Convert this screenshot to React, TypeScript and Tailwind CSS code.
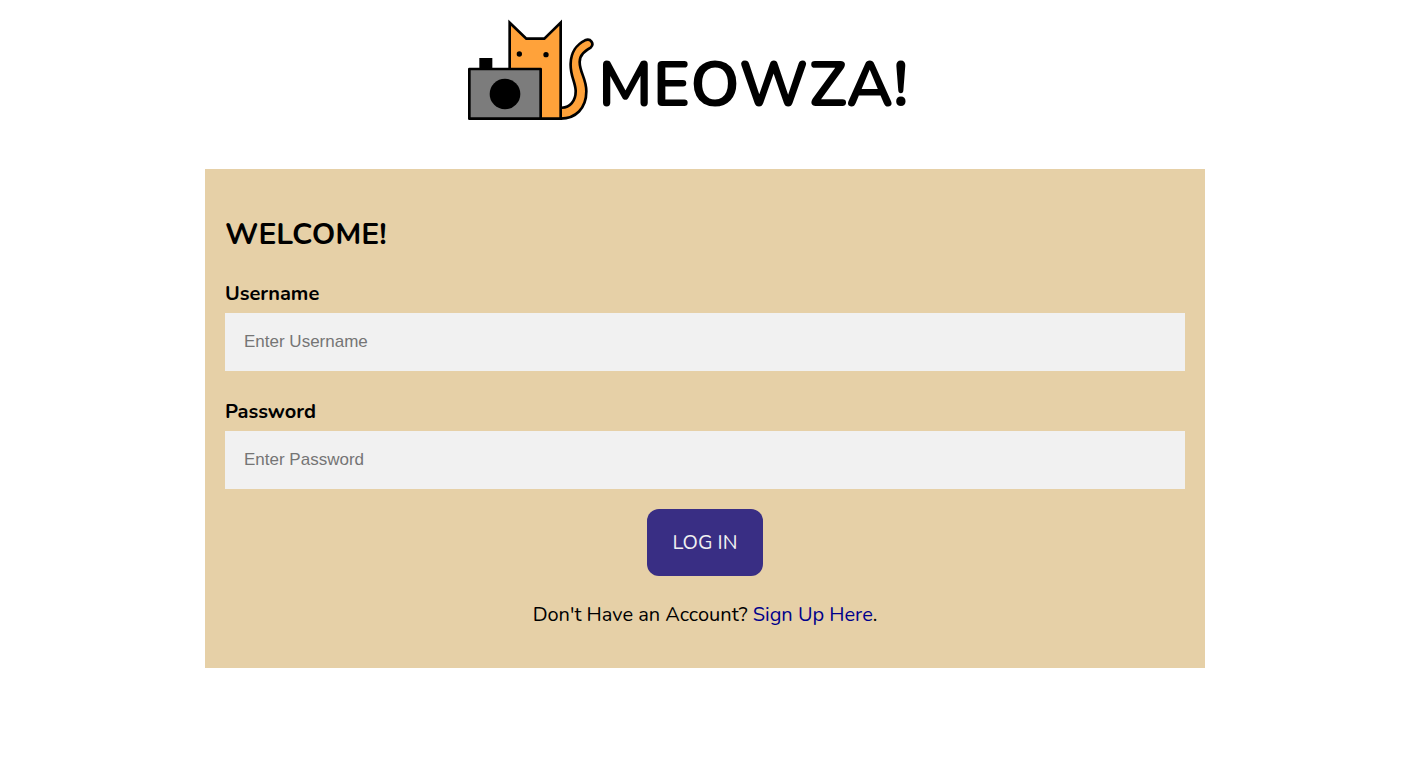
import { useState } from "react";

interface FieldProps {
  id: string;
  label: string;
  type: string;
  placeholder: string;
  value: string;
  onChange: (value: string) => void;
}

const CatLogo = () => (
  <svg viewBox="24 27 378 306" className="w-[126px] h-[102px] shrink-0" aria-hidden="true">
    {/* tail */}
    <path
      d="M302 293 C330 295 348 272 347 242 C346 215 330 196 332 160 C333 128 350 103 375 91 C392 84 404 101 392 113 C376 123 359 133 359 156 C359 188 379 205 379 244 C379 296 346 326 302 326 Z"
      fill="#ffa23a"
      stroke="#000"
      strokeWidth="8"
      strokeLinejoin="round"
    />
    {/* body */}
    <path
      d="M149 326 V38 L199 86 H253 L302 38 V326 Z"
      fill="#ffa23a"
      stroke="#000"
      strokeWidth="8"
    />
    <circle cx="178" cy="132" r="8" />
    <circle cx="258" cy="134" r="8" />
    {/* camera */}
    <rect x="58" y="144" width="39" height="34" />
    <rect
      x="28"
      y="177"
      width="214"
      height="149"
      fill="#7c7c7c"
      stroke="#000"
      strokeWidth="8"
      strokeLinejoin="round"
    />
    <circle cx="135" cy="252" r="46" />
  </svg>
);

const Field = ({ id, label, type, placeholder, value, onChange }: FieldProps) => (
  <div>
    <label htmlFor={id} className="block text-xl leading-7 font-bold">
      {label}
    </label>
    <input
      id={id}
      type={type}
      placeholder={placeholder}
      value={value}
      onChange={(e) => onChange(e.target.value)}
      className="block w-full h-[58px] mt-[5px] px-[19px] bg-[#f1f1f1] font-['Liberation_Sans',sans-serif] text-[17px] placeholder:text-[#757575]"
    />
  </div>
);

const App = () => {
  const [username, setUsername] = useState("");
  const [password, setPassword] = useState("");

  return (
    <div className="font-[Nunito,Lato,sans-serif] text-black">
      <header className="flex justify-center pt-[19px] pb-12">
        <div className="flex items-end gap-1 w-[474px]">
          <CatLogo />
          <h1 className="text-[63px] leading-[72px] font-bold">MEOWZA!</h1>
        </div>
      </header>

      <main className="max-w-[1000px] mx-auto px-5 pt-[46px] pb-[39px] bg-[#e6d0a7]">
        <form onSubmit={(e) => e.preventDefault()}>
          <h2 className="text-[30px] leading-10 font-bold">WELCOME!</h2>
          <div className="mt-[25px] space-y-[27px]">
            <Field
              id="username"
              label="Username"
              type="text"
              placeholder="Enter Username"
              value={username}
              onChange={setUsername}
            />
            <Field
              id="password"
              label="Password"
              type="password"
              placeholder="Enter Password"
              value={password}
              onChange={setPassword}
            />
          </div>
          <button
            type="submit"
            className="block mx-auto mt-5 w-[116px] h-[67px] rounded-xl bg-[#392e84] text-xl text-[#f1f1f1]"
          >
            LOG IN
          </button>
        </form>
        <p className="mt-[25px] text-xl leading-7 text-center">
          Don't Have an Account?{" "}
          <a href="#signup" className="text-[#00008b]">
            Sign Up Here
          </a>
          .
        </p>
      </main>
    </div>
  );
};

export default App;
